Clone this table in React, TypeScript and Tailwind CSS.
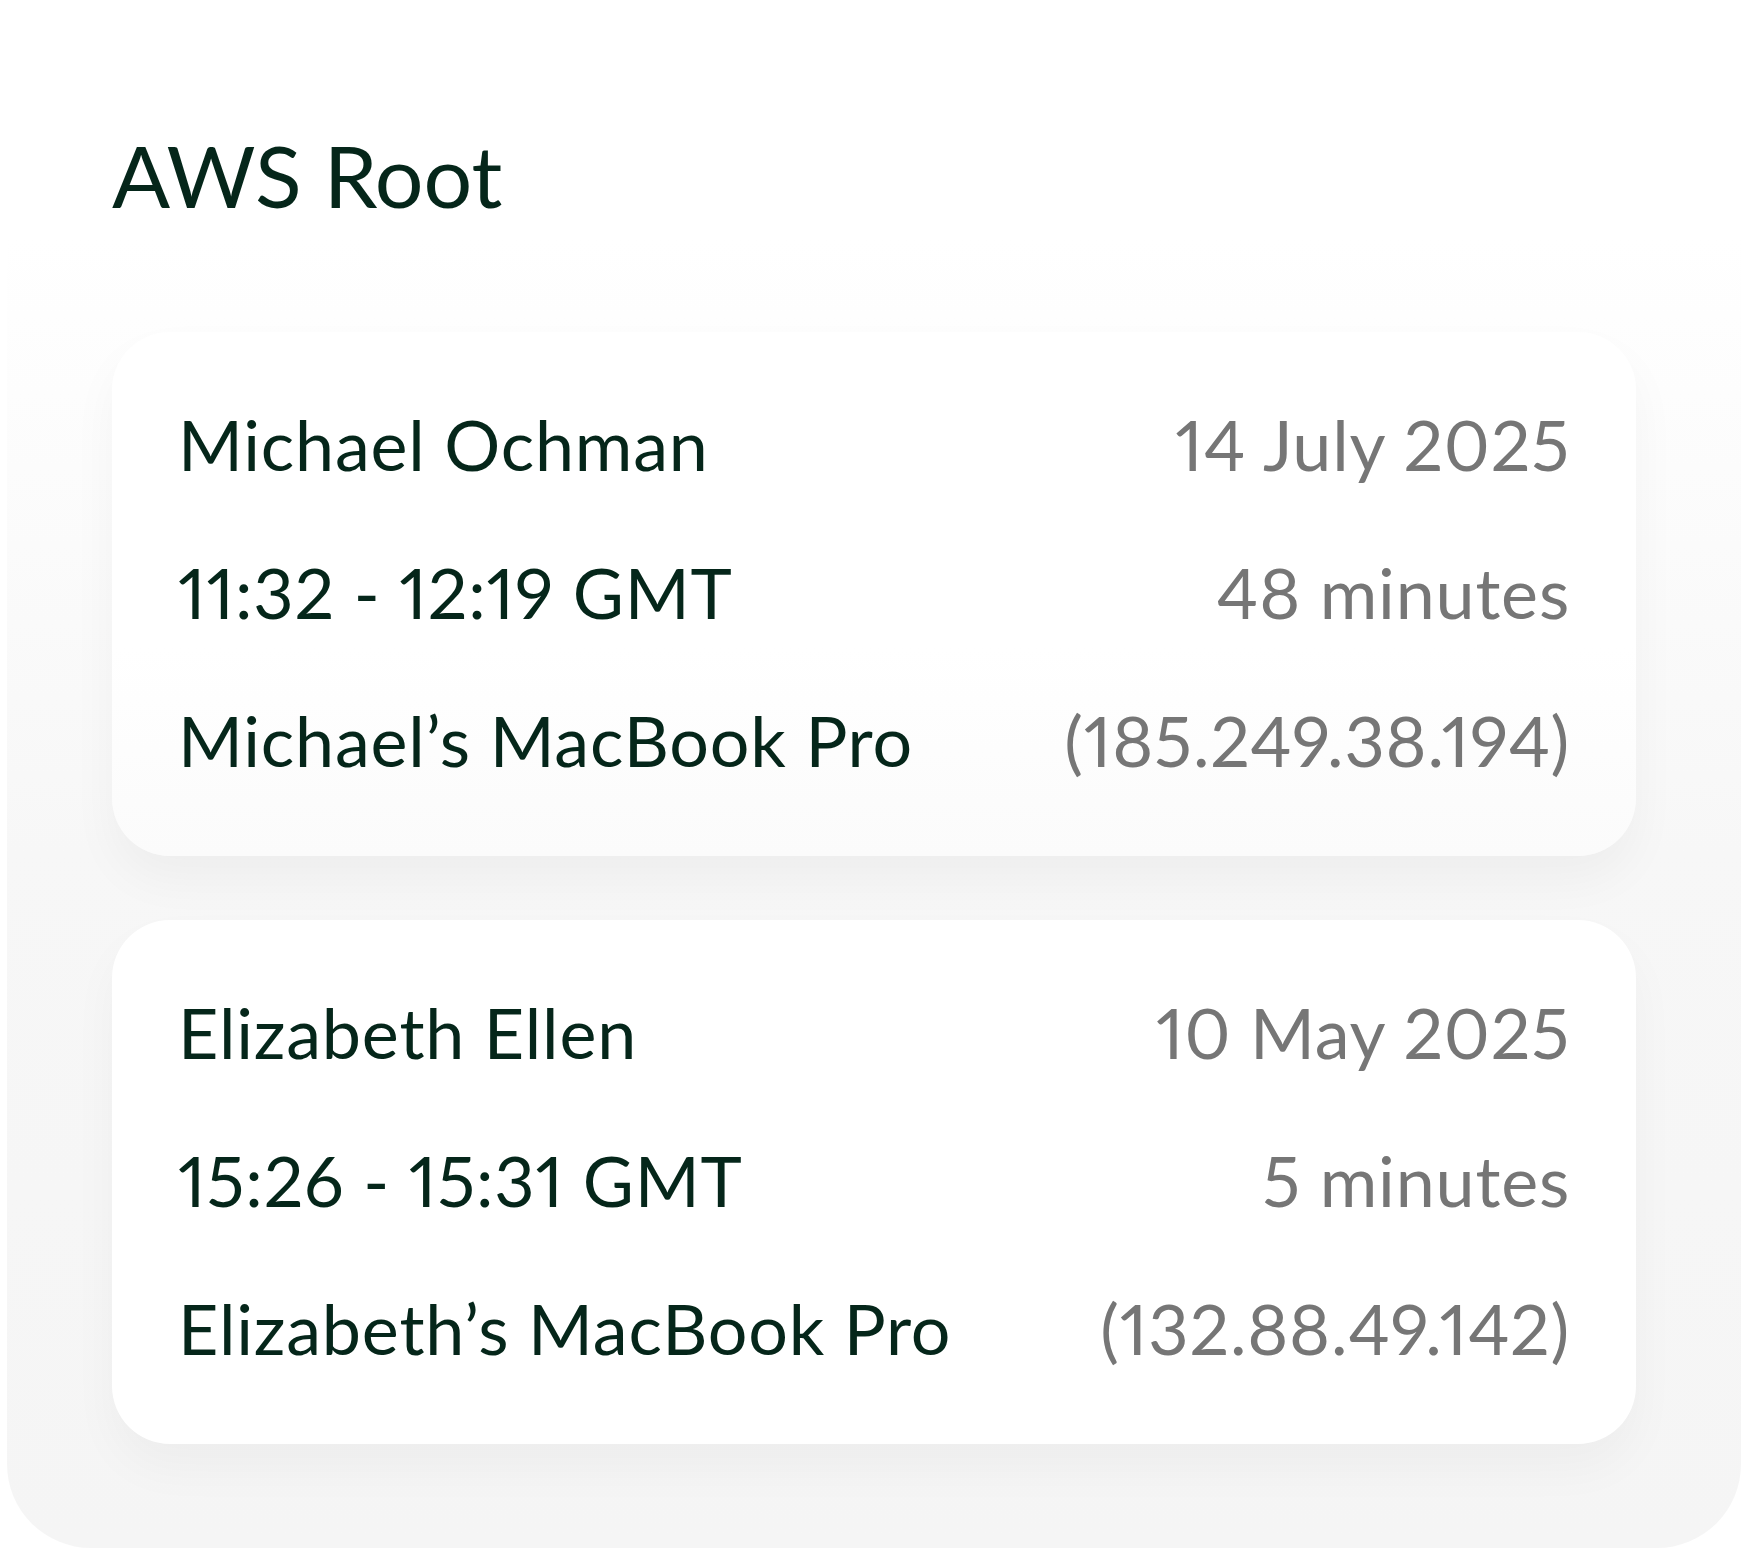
import React from "react";

type Session = {
  name: string;
  date: string;
  time: string;
  duration: string;
  device: string;
  ip: string;
};

const sessions: Session[] = [
  {
    name: "Michael Ochman",
    date: "14 July 2025",
    time: "11:32 - 12:19 GMT",
    duration: "48 minutes",
    device: "Michael’s MacBook Pro",
    ip: "(185.249.38.194)",
  },
  {
    name: "Elizabeth Ellen",
    date: "10 May 2025",
    time: "15:26 - 15:31 GMT",
    duration: "5 minutes",
    device: "Elizabeth’s MacBook Pro",
    ip: "(132.88.49.142)",
  },
];

function Row({ left, right }: { left: string; right: string }) {
  return (
    <div className="flex items-center justify-between leading-[148px] text-[70px] tracking-[0.8px] proportional-nums">
      <span className="text-[#05261a]">{left}</span>
      <span className="text-[#767676]">{right}</span>
    </div>
  );
}

function SessionCard({ s, last }: { s: Session; last: boolean }) {
  return (
    <div
      className={
        last
          ? "rounded-[58px] bg-white px-[66px] pt-[38px] pb-[42px] shadow-[0_24px_48px_rgba(0,0,0,0.035)]"
          : "rounded-[58px] bg-linear-to-b from-white from-60% to-[#fbfbfb] px-[66px] pt-[38px] pb-[42px] shadow-[0_24px_48px_rgba(0,0,0,0.04)]"
      }
    >
      <Row left={s.name} right={s.date} />
      <Row left={s.time} right={s.duration} />
      <Row left={s.device} right={s.ip} />
    </div>
  );
}

export default function App() {
  return (
    <div
      className="min-h-[1555px] bg-white p-[7px]"
      style={{ fontFamily: "Lato, 'Noto Sans', sans-serif" }}
    >
      <div className="rounded-[84px] bg-linear-to-b from-white from-15% via-[#f7f7f7] via-55% to-[#f5f5f5] px-[105px] pt-[125px] pb-[104px]">
        <h1 className="text-[86px] leading-none text-[#05261a] proportional-nums">AWS Root</h1>
        <div className="mt-[114px] flex flex-col gap-[64px]">
          {sessions.map((s, i) => (
            <SessionCard key={s.name} s={s} last={i === sessions.length - 1} />
          ))}
        </div>
      </div>
    </div>
  );
}
